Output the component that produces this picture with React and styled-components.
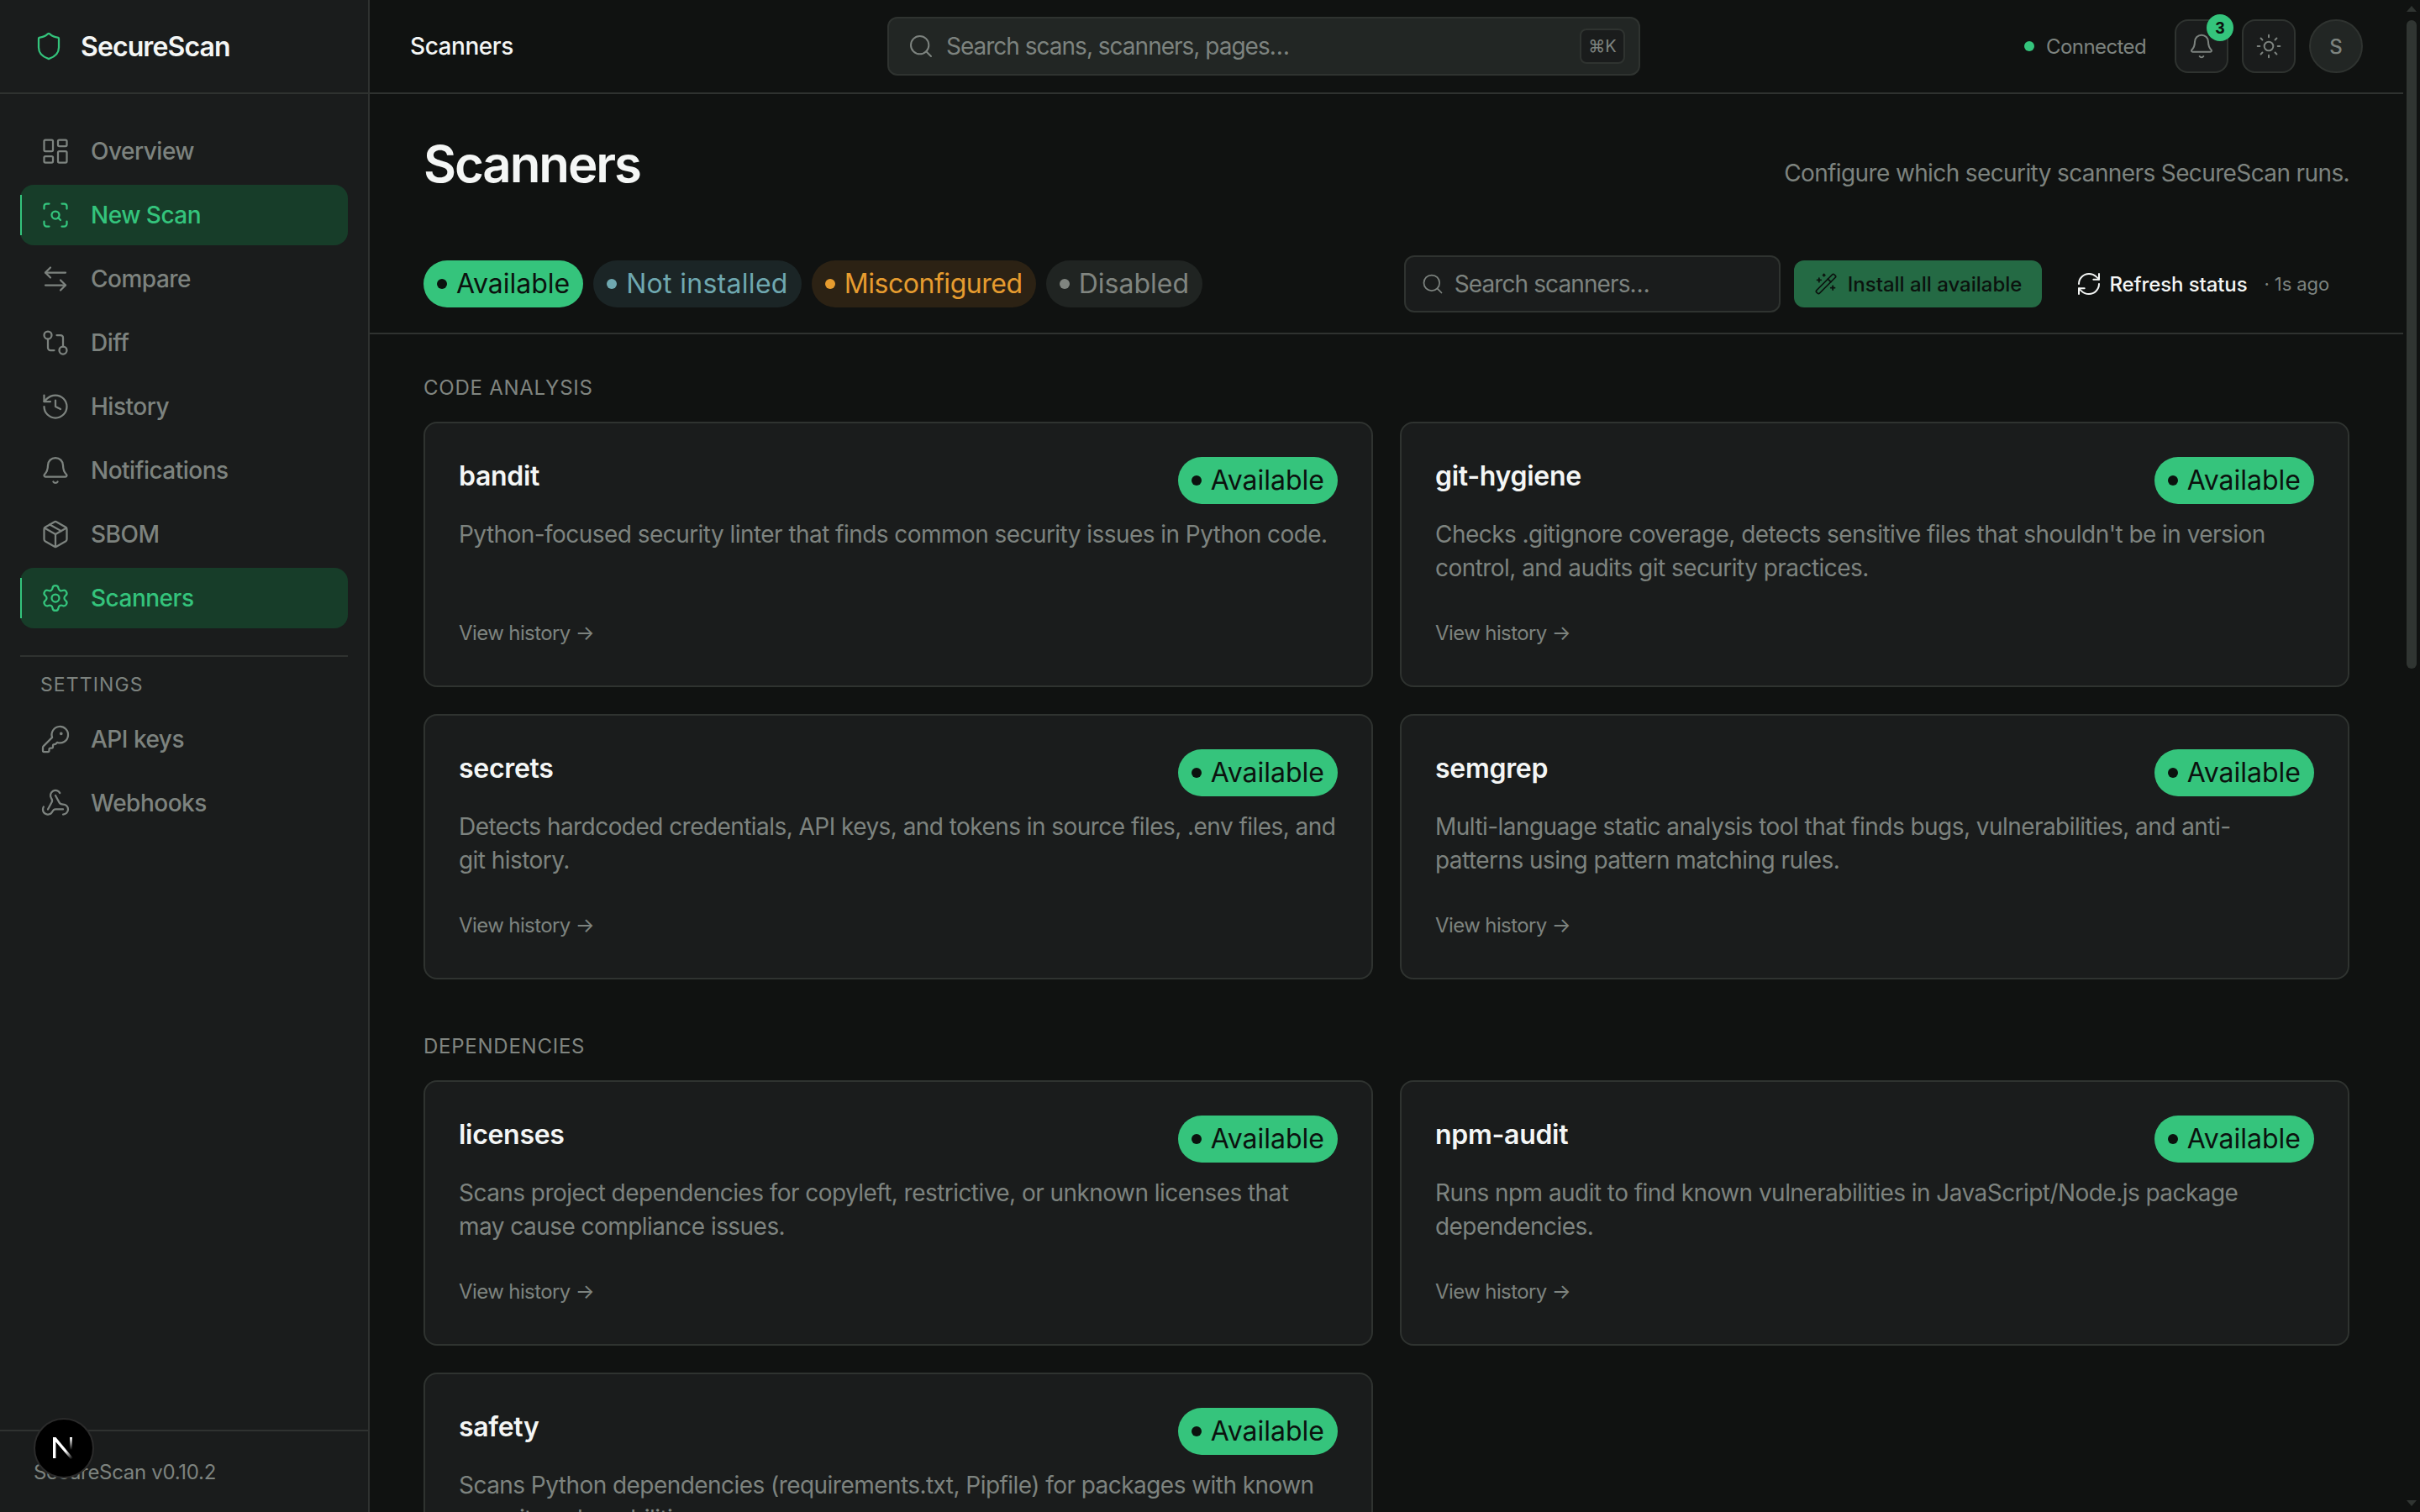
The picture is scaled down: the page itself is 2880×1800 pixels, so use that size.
import React from 'react'
import styled, { createGlobalStyle } from 'styled-components'
import {
  Shield,
  LayoutDashboard,
  ScanSearch,
  ArrowLeftRight,
  GitCompare,
  History,
  Bell,
  Package,
  Settings,
  KeyRound,
  Webhook,
  Search,
  Sun,
  WandSparkles,
  RefreshCw,
} from 'lucide-react'

const GlobalStyle = createGlobalStyle`
  html, body, #root {
    margin: 0;
    height: 100%;
  }
  body {
    background: #101211;
    color: #f4f6f5;
    font-family: Inter, "Liberation Sans", sans-serif;
    overflow: hidden;
  }
  * {
    box-sizing: border-box;
  }
`

const Shell = styled.div`
  display: flex;
  height: 100vh;
  position: relative;
`

const Sidebar = styled.aside`
  width: 440px;
  flex: none;
  display: flex;
  flex-direction: column;
  background: #1a1c1c;
  border-right: 2px solid #2f3230;
`

const Brand = styled.div`
  height: 112px;
  display: flex;
  align-items: center;
  gap: 20px;
  padding: 0 40px;
  border-bottom: 2px solid #2f3230;
  color: #f4f6f5;
  font-size: 32px;
  font-weight: 600;
  letter-spacing: -0.9px;

  svg {
    color: #34c47c;
  }
`

const Nav = styled.nav`
  display: flex;
  flex-direction: column;
  gap: 4px;
  padding: 32px 24px 0;
`

const NavItem = styled.a`
  position: relative;
  height: 72px;
  display: flex;
  align-items: center;
  gap: 24px;
  padding: 0 24px;
  border-radius: 16px;
  font-size: 28px;
  font-weight: 500;
  letter-spacing: -0.5px;
  color: ${p => (p.$active ? '#34c47c' : '#7d837f')};
  background: ${p => (p.$active ? '#173d29' : 'transparent')};

  &::before {
    content: ${p => (p.$active ? "''" : 'none')};
    position: absolute;
    left: 0;
    top: 12px;
    bottom: 12px;
    width: 2px;
    background: #34c47c;
  }
`

const NavDivider = styled.div`
  height: 2px;
  background: #2f3230;
  margin: 28px 0 0;
`

const NavLabel = styled.div`
  padding: 15px 24px 11px;
  font-size: 23px;
  line-height: 28px;
  letter-spacing: 1.1px;
  color: #7d837f;
`

const SidebarFooter = styled.div`
  margin-top: auto;
  height: 98px;
  border-top: 2px solid #2f3230;
  padding: 0 40px;
  display: flex;
  align-items: center;
  font-size: 24px;
  letter-spacing: -0.3px;
  color: #7d837f;
`

const DevBadge = styled.div`
  position: absolute;
  left: 40px;
  top: 1688px;
  width: 72px;
  height: 72px;
  border-radius: 50%;
  background: #000;
  border: 2px solid #2b2b2b;
  display: flex;
  align-items: center;
  justify-content: center;
`

const Scroller = styled.div`
  flex: 1;
  min-width: 0;
  height: 100vh;
  overflow: hidden;
  background: #101211;
`

const ScrollRail = styled.div`
  width: 20px;
  flex: none;
  display: flex;
  flex-direction: column;
  align-items: center;
  padding: 7px 0;
  background: #101211;
`

const ScrollArrow = styled.span`
  width: 0;
  height: 0;
  border-left: 6px solid transparent;
  border-right: 6px solid transparent;
  ${p => (p.$down ? 'border-top: 7px solid #303532; margin-top: auto;' : 'border-bottom: 7px solid #303532;')}
`

const ScrollThumb = styled.span`
  width: 12px;
  height: 772px;
  margin-top: 10px;
  border-radius: 6px;
  background: #303532;
`

const Topbar = styled.header`
  height: 112px;
  display: flex;
  align-items: center;
  padding: 0 48px;
  background: #101211;
  border-bottom: 2px solid #2f3230;
`

const TopTitle = styled.div`
  width: 568px;
  flex: none;
  font-size: 28px;
  font-weight: 500;
  letter-spacing: -0.45px;
  color: #f4f6f5;
`

const GlobalSearch = styled.div`
  width: 896px;
  height: 70px;
  flex: none;
  display: flex;
  align-items: center;
  gap: 14px;
  padding: 0 16px 0 22px;
  background: #222624;
  border: 2px solid #2f3330;
  border-radius: 12px;
  font-size: 28px;
  letter-spacing: -1px;
  color: #7d837f;

  span {
    flex: 1;
  }
`

const Kbd = styled.kbd`
  width: 54px;
  height: 42px;
  display: flex;
  align-items: center;
  justify-content: center;
  background: #1a1c1c;
  border: 2px solid #2f3330;
  border-radius: 8px;
  font-family: Inter, "DejaVu Sans", sans-serif;
  font-size: 20px;
  letter-spacing: 0;
  color: #7d837f;
`

const TopActions = styled.div`
  margin-left: auto;
  display: flex;
  align-items: center;
  gap: 16px;
`

const Connected = styled.div`
  display: flex;
  align-items: center;
  gap: 14px;
  margin-right: 18px;
  font-size: 24px;
  letter-spacing: -0.6px;
  color: #7d837f;

  &::before {
    content: '';
    width: 12px;
    height: 12px;
    border-radius: 50%;
    background: #34c47c;
  }
`

const IconButton = styled.button`
  position: relative;
  width: 64px;
  height: 64px;
  padding: 0;
  display: flex;
  align-items: center;
  justify-content: center;
  background: #1a1c1c;
  border: 2px solid #2f3330;
  border-radius: 16px;
  color: #7d837f;
`

const CountBadge = styled.span`
  position: absolute;
  top: -8px;
  right: -8px;
  width: 32px;
  height: 32px;
  border-radius: 50%;
  background: #34c47c;
  color: #0b120e;
  font-size: 20px;
  font-weight: 600;
  display: flex;
  align-items: center;
  justify-content: center;
`

const Avatar = styled.div`
  width: 64px;
  height: 64px;
  border-radius: 50%;
  background: #222624;
  border: 2px solid #2f3330;
  color: #7d837f;
  font-size: 24px;
  font-weight: 500;
  display: flex;
  align-items: center;
  justify-content: center;
`

const PageHead = styled.div`
  height: 192px;
  padding: 48px 64px 0;
  display: flex;
  justify-content: space-between;
  align-items: flex-start;
`

const PageTitle = styled.h1`
  margin: 0;
  font-size: 60px;
  line-height: 70px;
  font-weight: 600;
  letter-spacing: -2.1px;
  color: #f4f6f5;
`

const PageSub = styled.p`
  margin: 26px 0 0;
  font-size: 28px;
  line-height: 40px;
  letter-spacing: -0.62px;
  color: #7d837f;
`

const Toolbar = styled.div`
  height: 94px;
  padding: 0 64px 24px;
  display: flex;
  align-items: center;
  justify-content: space-between;
  border-bottom: 2px solid #2f3230;
`

const Chips = styled.div`
  display: flex;
  gap: 12px;
`

const chipStyles = {
  available: { bg: '#35c47c', fg: '#0b120e', track: '0' },
  missing: { bg: '#1b2526', fg: '#6fa8b0', track: '0.3px' },
  bad: { bg: '#2c2214', fg: '#e69c2f', track: '-0.45px' },
  off: { bg: '#202422', fg: '#808580', track: '0' },
}

const Chip = styled.span`
  height: 56px;
  display: inline-flex;
  align-items: center;
  gap: 11px;
  padding: 0 16px;
  border-radius: 28px;
  font-size: 32px;
  line-height: 54px;
  white-space: nowrap;
  letter-spacing: ${p => chipStyles[p.$kind].track};
  background: ${p => chipStyles[p.$kind].bg};
  color: ${p => chipStyles[p.$kind].fg};

  &::before {
    content: '';
    width: 12px;
    height: 12px;
    border-radius: 50%;
    background: currentColor;
  }
`

const ToolActions = styled.div`
  display: flex;
  align-items: center;
  gap: 16px;
`

const ScannerSearch = styled.div`
  width: 448px;
  height: 68px;
  display: flex;
  align-items: center;
  gap: 12px;
  padding: 0 18px;
  background: #1a1c1c;
  border: 2px solid #2f3330;
  border-radius: 12px;
  font-size: 28px;
  letter-spacing: -0.9px;
  color: #7d837f;
`

const InstallButton = styled.button`
  height: 56px;
  display: flex;
  align-items: center;
  gap: 12px;
  padding: 0 24px;
  background: #246a44;
  border: 0;
  border-radius: 12px;
  color: #0b120e;
  font: inherit;
  font-size: 24px;
  font-weight: 500;
`

const RefreshButton = styled.button`
  height: 56px;
  display: flex;
  align-items: center;
  gap: 8px;
  padding: 0 24px;
  background: transparent;
  border: 0;
  color: #f4f6f5;
  font: inherit;
  font-size: 24px;
  font-weight: 500;
  letter-spacing: -0.1px;

  small {
    margin-left: 12px;
    font-size: 22px;
    font-weight: 400;
    color: #7d837f;
  }
`

const Content = styled.main`
  padding: 48px 64px;
`

const Section = styled.section`
  margin-bottom: 64px;
`

const SectionLabel = styled.h2`
  margin: 0 0 24px;
  font-size: 24px;
  line-height: 32px;
  font-weight: 400;
  letter-spacing: 0.75px;
  color: #808580;
`

const CardGrid = styled.div`
  display: grid;
  grid-template-columns: 1fr 1fr;
  gap: 32px;
`

const Card = styled.article`
  display: flex;
  flex-direction: column;
  padding: 40px;
  background: #1a1c1c;
  border: 2px solid #2f3330;
  border-radius: 16px;
`

const CardHead = styled.div`
  display: flex;
  justify-content: space-between;
  align-items: flex-start;
`

const CardName = styled.h3`
  margin: 0;
  font-size: 32px;
  line-height: 46px;
  font-weight: 600;
  letter-spacing: -0.3px;
  color: #f4f6f5;
`

const CardDesc = styled.p`
  margin: 16px 0 0;
  min-height: 80px;
  font-size: 28px;
  line-height: 40px;
  letter-spacing: -0.55px;
  color: #7d837f;
`

const HistoryLink = styled.a`
  margin: 38px 0 2px;
  font-size: 24px;
  line-height: 40px;
  letter-spacing: -0.6px;
  color: #7d837f;
`

const mainNav = [
  { label: 'Overview', icon: LayoutDashboard },
  { label: 'New Scan', icon: ScanSearch, active: true },
  { label: 'Compare', icon: ArrowLeftRight },
  { label: 'Diff', icon: GitCompare },
  { label: 'History', icon: History },
  { label: 'Notifications', icon: Bell },
  { label: 'SBOM', icon: Package },
  { label: 'Scanners', icon: Settings, active: true },
]

const settingsNav = [
  { label: 'API keys', icon: KeyRound },
  { label: 'Webhooks', icon: Webhook },
]

const sections = [
  {
    title: 'CODE ANALYSIS',
    scanners: [
      { name: 'bandit', desc: 'Python-focused security linter that finds common security issues in Python code.' },
      { name: 'git-hygiene', desc: "Checks .gitignore coverage, detects sensitive files that shouldn't be in version control, and audits git security practices." },
      { name: 'secrets', desc: 'Detects hardcoded credentials, API keys, and tokens in source files, .env files, and git history.' },
      { name: 'semgrep', desc: 'Multi-language static analysis tool that finds bugs, vulnerabilities, and anti-patterns using pattern matching rules.' },
    ],
  },
  {
    title: 'DEPENDENCIES',
    scanners: [
      { name: 'licenses', desc: 'Scans project dependencies for copyleft, restrictive, or unknown licenses that may cause compliance issues.' },
      { name: 'npm-audit', desc: 'Runs npm audit to find known vulnerabilities in JavaScript/Node.js package dependencies.' },
      { name: 'safety', desc: 'Scans Python dependencies (requirements.txt, Pipfile) for packages with known security vulnerabilities.' },
    ],
  },
]

const NextMark = () => (
  <svg width="28" height="28" viewBox="0 0 28 28" fill="none">
    <defs>
      <linearGradient id="nextDiag" x1="0.2" y1="0.2" x2="0.9" y2="1">
        <stop offset="0.55" stopColor="#fff" />
        <stop offset="1" stopColor="#fff" stopOpacity="0" />
      </linearGradient>
      <linearGradient id="nextStem" x1="0" y1="0" x2="0" y2="1">
        <stop offset="0" stopColor="#fff" />
        <stop offset="1" stopColor="#fff" stopOpacity="0" />
      </linearGradient>
    </defs>
    <path d="M1 1h3.4L26 27h-4L4.4 6.4V26H1z" fill="url(#nextDiag)" />
    <rect x="21" y="1" width="3" height="15" fill="url(#nextStem)" />
  </svg>
)

const renderNav = items =>
  items.map(({ label, icon: Icon, active }) => (
    <NavItem key={label} $active={active}>
      <Icon size={36} strokeWidth={1.5} />
      {label}
    </NavItem>
  ))

export default function App() {
  return (
    <Shell>
      <GlobalStyle />
      <Sidebar>
        <Brand>
          <Shield size={36} strokeWidth={1.5} />
          SecureScan
        </Brand>
        <Nav>
          {renderNav(mainNav)}
          <NavDivider />
          <NavLabel>SETTINGS</NavLabel>
          {renderNav(settingsNav)}
        </Nav>
        <SidebarFooter>SecureScan v0.10.2</SidebarFooter>
      </Sidebar>
      <DevBadge>
        <NextMark />
      </DevBadge>
      <Scroller>
        <Topbar>
          <TopTitle>Scanners</TopTitle>
          <GlobalSearch>
            <Search size={32} strokeWidth={1.5} />
            <span>Search scans, scanners, pages…</span>
            <Kbd>⌘K</Kbd>
          </GlobalSearch>
          <TopActions>
            <Connected>Connected</Connected>
            <IconButton>
              <Bell size={32} strokeWidth={1.5} />
              <CountBadge>3</CountBadge>
            </IconButton>
            <IconButton>
              <Sun size={32} strokeWidth={1.5} />
            </IconButton>
            <Avatar>S</Avatar>
          </TopActions>
        </Topbar>
        <PageHead>
          <PageTitle>Scanners</PageTitle>
          <PageSub>Configure which security scanners SecureScan runs.</PageSub>
        </PageHead>
        <Toolbar>
          <Chips>
            <Chip $kind="available">Available</Chip>
            <Chip $kind="missing">Not installed</Chip>
            <Chip $kind="bad">Misconfigured</Chip>
            <Chip $kind="off">Disabled</Chip>
          </Chips>
          <ToolActions>
            <ScannerSearch>
              <Search size={28} strokeWidth={1.5} />
              Search scanners…
            </ScannerSearch>
            <InstallButton>
              <WandSparkles size={28} strokeWidth={1.5} />
              Install all available
            </InstallButton>
            <RefreshButton>
              <RefreshCw size={32} strokeWidth={1.5} />
              Refresh status
              <small>· 1s ago</small>
            </RefreshButton>
          </ToolActions>
        </Toolbar>
        <Content>
          {sections.map(section => (
            <Section key={section.title}>
              <SectionLabel>{section.title}</SectionLabel>
              <CardGrid>
                {section.scanners.map(scanner => (
                  <Card key={scanner.name}>
                    <CardHead>
                      <CardName>{scanner.name}</CardName>
                      <Chip $kind="available">Available</Chip>
                    </CardHead>
                    <CardDesc>{scanner.desc}</CardDesc>
                    <HistoryLink>View history →</HistoryLink>
                  </Card>
                ))}
              </CardGrid>
            </Section>
          ))}
        </Content>
      </Scroller>
      <ScrollRail>
        <ScrollArrow />
        <ScrollThumb />
        <ScrollArrow $down />
      </ScrollRail>
    </Shell>
  )
}
